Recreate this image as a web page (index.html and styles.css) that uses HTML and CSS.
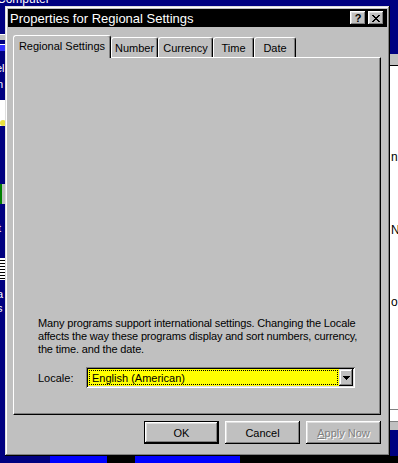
FILE: index.html
```html
<!DOCTYPE html>
<html lang="en">
<head>
    <meta charset="UTF-8">
    <title>Properties for Regional Settings</title>
    <link rel="stylesheet" href="styles.css">
</head>
<body>
    <!-- desktop behind the dialog -->
    <div class="desk-label">Computer</div>
    <div class="desk-bit bit-a"></div>
    <div class="desk-bit bit-b"></div>
    <div class="desk-text txt-a">el</div>
    <div class="desk-text txt-b">n</div>
    <div class="desk-bit bit-c"></div>
    <div class="desk-bit bit-d"></div>
    <div class="desk-text txt-c">t</div>
    <div class="desk-bit bit-e"></div>
    <div class="desk-text txt-d">a</div>
    <div class="desk-text txt-e">s</div>

    <div class="back-window">
        <span class="bw-text bw-1">n</span>
        <span class="bw-text bw-2">N</span>
        <span class="bw-text bw-3">ou</span>
        <div class="bw-foot"></div>
    </div>
    <div class="floor">
        <div class="floor-blue f1"></div>
        <div class="floor-black f2"></div>
        <div class="floor-blue f3"></div>
        <div class="floor-black f4"></div>
    </div>

    <div class="dialog">
        <div class="titlebar">
            <span class="title">Properties for Regional Settings</span>
            <div class="tb-buttons">
                <button class="tb-btn help">?</button>
                <button class="tb-btn close">
                    <svg width="8" height="7" viewBox="0 0 8 7"><path d="M0 0h2v1h1v1h2v-1h1v-1h2v1h-1v1h-1v1h-1v1h1v1h1v1h1v1h-2v-1h-1v-1h-2v1h-1v1h-2v-1h1v-1h1v-1h1v-1h-1v-1h-1v-1h-1z" fill="#000"/></svg>
                </button>
            </div>
        </div>

        <div class="content">
            <div class="tabs">
                <div class="tab active" style="width:98px">Regional Settings</div>
                <div class="tab" style="width:47px">Number</div>
                <div class="tab" style="width:55px">Currency</div>
                <div class="tab" style="width:41px">Time</div>
                <div class="tab" style="width:42px">Date</div>
            </div>
            <div class="panel">
                <p class="info">Many programs support international settings. Changing the Locale<br>affects the way these programs display and sort numbers, currency,<br>the time. and the date.</p>
                <div class="locale-row">
                    <span class="locale-label">Locale:</span>
                    <div class="combo">
                        <div class="combo-field"><span class="combo-text">English (American)</span></div>
                        <div class="combo-btn">
                            <svg width="7" height="4" viewBox="0 0 7 4"><path d="M0 0h7v1h-1v1h-1v1h-1v1h-1v-1h-1v-1h-1v-1h-1z" fill="#000"/></svg>
                        </div>
                    </div>
                </div>
            </div>
            <div class="actions">
                <button class="btn default">OK</button>
                <button class="btn">Cancel</button>
                <button class="btn disabled"><u>A</u>pply Now</button>
            </div>
        </div>
    </div>
</body>
</html>
```

FILE: styles.css
```css
* {
    box-sizing: border-box;
}
body {
    margin: 0;
    width: 398px;
    height: 463px;
    overflow: hidden;
    position: relative;
    background: #000080;
    font-family: "Liberation Sans", Arial, sans-serif;
    font-size: 11px;
    color: #000;
}

/* desktop bits */
.desk-label {
    position: absolute;
    left: -3px;
    top: -8px;
    color: #fff;
    font-size: 12px;
}
.desk-bit {
    position: absolute;
    left: 0;
    width: 5px;
}
.bit-a { top: 34px; height: 6px; background: #c0c0c0; border-top: 1px solid #fff; }
.bit-b { top: 44px; height: 7px; background: #3030ff; border-top: 1px solid #fff; }
.bit-c { top: 100px; height: 26px; background: #fff; border-bottom: 6px dotted #e8e040; }
.bit-d { top: 184px; height: 20px; background: #c0c0c0; border-left: 2px solid #008000; }
.bit-e { top: 258px; height: 22px; background: repeating-linear-gradient(#fff 0 2px, #000 2px 3px); }
.desk-text {
    position: absolute;
    color: #fff;
    font-size: 11px;
    left: -4px;
}
.txt-a { top: 62px; }
.txt-b { top: 78px; left: -3px; }
.txt-c { top: 222px; left: -2px; }
.txt-d { top: 288px; left: -3px; }
.txt-e { top: 302px; left: -3px; }

.back-window {
    position: absolute;
    left: 386px;
    top: 54px;
    width: 14px;
    height: 376px;
    background: #fff;
    border-top: 11px solid #c0c0c0;
    box-shadow: inset 0 1px #000;
}
.bw-text {
    position: absolute;
    left: 5px;
    font-size: 12px;
}
.bw-1 { top: 85px; }
.bw-2 { top: 158px; }
.bw-3 { top: 230px; }
.bw-foot {
    position: absolute;
    left: 0;
    right: 0;
    bottom: 0;
    height: 21px;
    background: #c0c0c0;
    border-top: 1px solid #808080;
    box-shadow: inset 0 1px #fff, inset 0 11px #fff, inset 0 12px #808080;
}
.floor {
    position: absolute;
    left: 0;
    right: 0;
    top: 456px;
    height: 7px;
}
.floor div {
    position: absolute;
    top: 0;
    height: 7px;
}
.floor-blue { background: #0000ff; }
.floor-black { background: #000; }
.f1 { left: 50px; width: 57px; }
.f2 { left: 107px; width: 28px; }
.f3 { left: 135px; width: 105px; }
.f4 { left: 240px; width: 158px; }

/* dialog */
.dialog {
    position: absolute;
    left: 5px;
    top: 6px;
    width: 385px;
    height: 450px;
    padding: 3px;
    background: #c0c0c0;
    box-shadow: inset -1px -1px #000, inset 1px 1px #dfdfdf, inset -2px -2px #808080, inset 2px 2px #fff;
    display: flex;
    flex-direction: column;
}
.titlebar {
    height: 18px;
    background: #000;
    color: #fff;
    display: flex;
    align-items: center;
    padding: 0 3px 0 2px;
}
.title {
    flex: 1;
    font-size: 13px;
}
.tb-buttons {
    display: flex;
    gap: 2px;
}
.tb-btn {
    width: 16px;
    height: 14px;
    padding: 0;
    border: 0;
    background: #c0c0c0;
    box-shadow: inset -1px -1px #000, inset 1px 1px #fff, inset -2px -2px #808080, inset 2px 2px #dfdfdf;
    display: flex;
    align-items: center;
    justify-content: center;
    font-family: "Liberation Sans", Arial, sans-serif;
    font-size: 11px;
    font-weight: bold;
    color: #000;
}

.content {
    margin: 8px 6px 0 5px;
}
.tabs {
    display: flex;
    height: 22px;
    align-items: flex-end;
    position: relative;
    z-index: 1;
}
.tab {
    height: 20px;
    background: #c0c0c0;
    border-top: 1px solid #fff;
    border-left: 1px solid #fff;
    border-right: 1px solid #000;
    box-shadow: inset -1px 0 #808080;
    border-radius: 3px 3px 0 0;
    display: flex;
    align-items: center;
    justify-content: center;
    white-space: nowrap;
}
.tab.active {
    height: 23px;
    margin-bottom: -1px;
    padding-bottom: 2px;
}
.panel {
    height: 358px;
    border-top: 1px solid #fff;
    border-left: 1px solid #fff;
    border-right: 1px solid #000;
    border-bottom: 1px solid #000;
    box-shadow: inset -1px -1px #808080;
    padding: 0 6px 26px 24px;
    display: flex;
    flex-direction: column;
    justify-content: flex-end;
}
.info {
    margin: 0 0 11px;
    line-height: 13px;
    letter-spacing: -0.15px;
    white-space: nowrap;
}
.locale-row {
    display: flex;
    align-items: center;
}
.locale-label {
    width: 48px;
}
.combo {
    width: 269px;
    height: 21px;
    padding: 2px;
    display: flex;
    box-shadow: inset 1px 1px #808080, inset -1px -1px #fff, inset 2px 2px #000, inset -2px -2px #dfdfdf;
}
.combo-field {
    flex: 1;
    background: #ffff00;
    padding: 1px;
    display: flex;
}
.combo-text {
    flex: 1;
    border: 1px dotted #000;
    padding-left: 2px;
    display: flex;
    align-items: center;
}
.combo-btn {
    width: 14px;
    background: #c0c0c0;
    box-shadow: inset -1px -1px #000, inset 1px 1px #dfdfdf, inset -2px -2px #808080, inset 2px 2px #fff;
    display: flex;
    align-items: center;
    justify-content: center;
}

.actions {
    display: flex;
    justify-content: flex-end;
    gap: 6px;
    margin-top: 6px;
}
.btn {
    width: 75px;
    height: 23px;
    padding: 0;
    border: 0;
    background: #c0c0c0;
    font-family: "Liberation Sans", Arial, sans-serif;
    font-size: 11px;
    color: #000;
    box-shadow: inset -1px -1px #000, inset 1px 1px #fff, inset -2px -2px #808080, inset 2px 2px #dfdfdf;
}
.btn.default {
    box-shadow: inset 0 0 0 1px #000, inset -2px -2px #000, inset 2px 2px #fff, inset -3px -3px #808080, inset 3px 3px #dfdfdf;
}
.btn.disabled {
    color: #808080;
    text-shadow: 1px 1px #fff;
}
```
